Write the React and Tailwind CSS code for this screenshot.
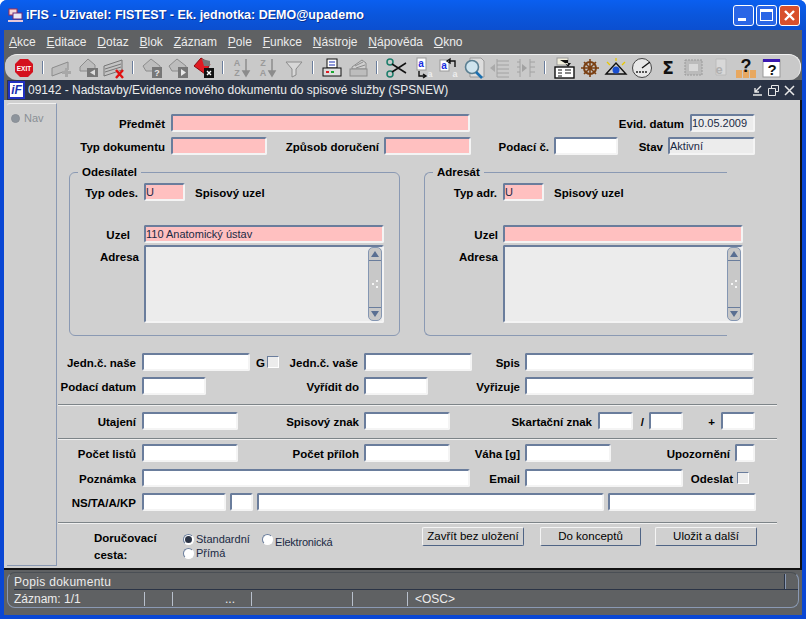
const sans = { fontFamily: '"Liberation Sans", Arial, sans-serif' }

function L({ w, className = '', children }) {
  return <div className={`shrink-0 whitespace-nowrap pt-[4px] text-right text-[11.5px] font-bold text-black ${w} ${className}`}>{children}</div>
}

function F({ c, tone = 'white', children }) {
  const bg = tone === 'pink' ? 'bg-[#ffc0c0]' : tone === 'grey' ? 'bg-[#ececec]' : 'bg-white'
  return (
    <div className={`h-[18px] shrink-0 overflow-hidden rounded-[2px] border-2 border-t-[#6a7d9c] border-l-[#6a7d9c] border-r-[#f4f4f4] border-b-[#f4f4f4] text-[11px] leading-[14px] text-[#1a2a44] ${bg} ${c}`}>
      {children}
    </div>
  )
}

function Row({ className = '', children }) {
  return <div className={`flex h-[18px] items-center ${className}`}>{children}</div>
}

function Divider({ className = '' }) {
  return <div className={`h-[2px] w-[719px] border-t border-b border-t-[#7d8488] border-b-[#f0f0f0] ${className}`} />
}

function Check({ className = '' }) {
  return <div className={`h-[12px] w-[12px] shrink-0 border border-t-[#6a7d9c] border-l-[#6a7d9c] border-r-white border-b-white bg-[#ececec] ${className}`} />
}

function Radio({ on, className = '' }) {
  return (
    <div className={`flex h-[11px] w-[11px] shrink-0 items-center justify-center rounded-full border border-t-[#6a7d9c] border-l-[#6a7d9c] border-r-white border-b-white bg-white ${className}`}>
      {on && <div className="h-[7px] w-[7px] rounded-full bg-[#2b3446]" />}
    </div>
  )
}

function Btn({ c, children }) {
  return (
    <div className={`flex h-[19px] items-center justify-center rounded-[2px] border border-t-[#f4f4f4] border-l-[#f4f4f4] border-r-[#4f6485] border-b-[#4f6485] bg-[#d0d0d0] text-[11.5px] text-black ${c}`}>
      {children}
    </div>
  )
}

function AddressBox() {
  return (
    <div className="ml-[5px] flex h-[78px] w-[240px] shrink-0 rounded-[2px] border-2 border-t-[#6a7d9c] border-l-[#6a7d9c] border-r-[#f4f4f4] border-b-[#f4f4f4] bg-[#ececec]">
      <div className="flex-1" />
      <div className="flex w-[14px] flex-col rounded-[5px] border border-[#8496b2] bg-[#c8c8c8]">
        <div className="flex h-[13px] items-center justify-center border-b border-b-[#6a7d9c]">
          <svg width="8" height="6" viewBox="0 0 8 6"><path d="M4 0L8 6H0Z" fill="#5a6f92" /></svg>
        </div>
        <div className="flex flex-1 items-center justify-center">
          <svg width="8" height="10" viewBox="0 0 8 10"><g fill="#f4f4f4"><rect x="5" y="1" width="2" height="2" /><rect x="1" y="4" width="2" height="2" /><rect x="5" y="7" width="2" height="2" /></g></svg>
        </div>
        <div className="flex h-[13px] items-center justify-center border-t border-t-[#6a7d9c]">
          <svg width="8" height="6" viewBox="0 0 8 6"><path d="M4 6L8 0H0Z" fill="#5a6f92" /></svg>
        </div>
      </div>
    </div>
  )
}

function Ic({ children }) {
  return (
    <span className="flex w-[26px] shrink-0 justify-center">
      <svg width="24" height="22" viewBox="0 0 24 22">{children}</svg>
    </span>
  )
}

function Sep() {
  return <span className="mx-[5px] h-[13px] w-[2px] shrink-0 border-l border-l-[#6a7d9c] bg-white" />
}

const card = { fill: '#bdbdbd', stroke: '#8c8c8c' }
const letters = { fontFamily: '"Liberation Sans", sans-serif', fontWeight: 700, fontSize: 9 }

function Toolbar() {
  return (
    <div className="mx-[1px] flex h-[26px] items-center rounded-[12px] border-t border-r border-t-[#f0f0f0] border-r-[#f0f0f0] bg-[#c9c9c9] pl-[6px]">
      <Ic>
        <path d="M8 2H16L21 7V15L16 20H8L3 15V7Z" fill="#d4111e" />
        <text x="12" y="13.5" textAnchor="middle" fill="#fff" style={{ ...letters, fontSize: 6.5 }}>EXIT</text>
      </Ic>
      <Sep />
      <Ic>
        <path d="M2 11L18 5V13L2 19Z" {...card} />
        <path d="M15 11H18V14H21V17H18V20H15V17H12V14H15Z" fill="#a8a8a8" />
      </Ic>
      <Ic>
        <path d="M4 10L12 2L19 8V14H4Z" {...card} />
        <rect x="11" y="11" width="11" height="9" fill="#777" />
        <path d="M14 15.5L19 12.5V18.5Z" fill="#ddd" />
      </Ic>
      <Ic>
        <path d="M2 9L20 3V13L2 19Z" fill="#c4c4c4" stroke="#777" />
        <path d="M3 12L19 7M3 15L19 10" stroke="#777" />
        <path d="M14 13L21 21M21 13L14 21" stroke="#e01010" strokeWidth="2.4" />
      </Ic>
      <Sep />
      <Ic>
        <path d="M3 9L11 2L20 9V14H6Z" {...card} />
        <rect x="12" y="10" width="10" height="11" fill="#777" />
        <text x="17" y="19" textAnchor="middle" fill="#e8e8e8" style={letters}>?</text>
      </Ic>
      <Ic>
        <path d="M3 9L11 2L20 9V14H6Z" {...card} />
        <rect x="12" y="10" width="10" height="11" fill="#777" />
        <path d="M15 12L20 15.5L15 19Z" fill="#e8e8e8" />
      </Ic>
      <Ic>
        <path d="M2 9L9 1L18 7L13 17Z" fill="#e01b22" stroke="#8a0a0e" />
        <path d="M10 2L18 4V9H12Z" fill="#777" />
        <rect x="12" y="11" width="10" height="10" fill="#111" />
        <path d="M15 14L19 18M19 14L15 18" stroke="#fff" strokeWidth="1.4" />
      </Ic>
      <Sep />
      <Ic>
        <text x="7" y="9" textAnchor="middle" fill="#9a9a9a" style={letters}>A</text>
        <text x="7" y="19" textAnchor="middle" fill="#9a9a9a" style={letters}>Z</text>
        <path d="M16 2V17M13 14L16 19L19 14Z" stroke="#8c8c8c" strokeWidth="1.5" fill="#8c8c8c" />
      </Ic>
      <Ic>
        <text x="7" y="9" textAnchor="middle" fill="#9a9a9a" style={letters}>Z</text>
        <text x="7" y="19" textAnchor="middle" fill="#9a9a9a" style={letters}>A</text>
        <path d="M16 2V17M13 14L16 19L19 14Z" stroke="#8c8c8c" strokeWidth="1.5" fill="#8c8c8c" />
      </Ic>
      <Ic>
        <path d="M4 5H20L14 12V18L10 20V12Z" fill="#d8d8d8" stroke="#8c8c8c" />
      </Ic>
      <Sep />
      <Ic>
        <rect x="7" y="2" width="10" height="9" fill="#fff" stroke="#111" />
        <path d="M9 5H15M9 8H15" stroke="#1a2fb0" />
        <rect x="3" y="11" width="18" height="8" fill="#ddd" stroke="#111" />
        <rect x="6" y="14" width="3" height="2" fill="#e01b22" />
        <rect x="11" y="14" width="3" height="2" fill="#19a832" />
      </Ic>
      <Ic>
        <path d="M6 10L16 3L20 6V12H6Z" fill="#cfcfcf" stroke="#8c8c8c" />
        <path d="M9 9L17 5M10 11L19 8" stroke="#8c8c8c" />
        <rect x="4" y="12" width="17" height="7" fill="#bdbdbd" stroke="#8c8c8c" />
      </Ic>
      <Sep />
      <Ic>
        <circle cx="6" cy="5" r="3" fill="none" stroke="#1b7d6a" strokeWidth="1.5" />
        <circle cx="6" cy="17" r="3" fill="none" stroke="#1b7d6a" strokeWidth="1.5" />
        <path d="M8 7L22 16M8 15L22 6" stroke="#111" strokeWidth="1.5" />
      </Ic>
      <Ic>
        <rect x="7" y="1" width="9" height="12" fill="#fff" stroke="#999" />
        <text x="11" y="10" textAnchor="middle" fill="#1a2fe0" style={{ ...letters, fontSize: 10 }}>a</text>
        <path d="M9 14V19H15M13 17L16 19L13 21" fill="none" stroke="#111" strokeWidth="1.4" />
        <text x="20" y="20" textAnchor="middle" fill="#eee" style={{ ...letters, fontSize: 9 }}>a</text>
      </Ic>
      <Ic>
        <rect x="4" y="3" width="9" height="11" fill="#fff" stroke="#999" />
        <text x="8" y="12" textAnchor="middle" fill="#1a2fe0" style={{ ...letters, fontSize: 10 }}>a</text>
        <path d="M13 4H19V10M11 4L14 2V6Z" fill="none" stroke="#111" strokeWidth="1.4" />
        <text x="19" y="20" textAnchor="middle" fill="#eee" style={{ ...letters, fontSize: 9 }}>a</text>
      </Ic>
      <Ic>
        <path d="M8 1H19L22 4V20H8Z" fill="#ddd" stroke="#999" />
        <circle cx="10" cy="10" r="6.5" fill="#cfe4ee" stroke="#5a7f92" strokeWidth="1.6" />
        <path d="M14 15L20 21" stroke="#1a6fb0" strokeWidth="2.6" />
      </Ic>
      <Ic>
        <path d="M2 11L7 7V15Z" fill="#aaa" />
        <path d="M9 2V20M9 4H21M9 8H21M9 12H21M9 16H21M9 20H21" stroke="#a2a2a2" />
      </Ic>
      <Ic>
        <path d="M6 2V20M6 5H3M6 10H3M6 15H3M16 2V20M16 5H21M16 10H21M16 15H21" stroke="#a2a2a2" />
        <path d="M8 7L13 11L8 15Z" fill="#a2a2a2" />
      </Ic>
      <Sep />
      <Ic>
        <rect x="5" y="1" width="11" height="7" fill="#f2efdc" stroke="#999" />
        <path d="M8 3H16V8M13 6L16 10L19 6Z" fill="#111" />
        <rect x="3" y="10" width="19" height="11" fill="#fff" stroke="#111" strokeWidth="1.4" />
        <path d="M6 13H10M6 16H10M6 19H10M13 13H19M13 16H19" stroke="#111" />
      </Ic>
      <Ic>
        <circle cx="12" cy="11" r="6" fill="none" stroke="#7a3f12" strokeWidth="2" />
        <path d="M3 11H21M12 2V20M6 5L18 17M18 5L6 17" stroke="#7a3f12" strokeWidth="1.6" />
      </Ic>
      <Ic>
        <path d="M2 17L12 6L22 17Z" fill="#cfcfcf" stroke="#111" strokeWidth="1.4" />
        <circle cx="12" cy="13" r="3.5" fill="#1a4fd0" />
        <path d="M3 5L6 8M12 1V4M21 5L18 8" stroke="#e8c800" strokeWidth="1.3" />
      </Ic>
      <Ic>
        <circle cx="12" cy="11" r="9.5" fill="#e8e8e8" stroke="#444" />
        <path d="M12 11L20 5" stroke="#111" strokeWidth="1.3" />
        <path d="M6 15H18" stroke="#555" strokeWidth="2" strokeDasharray="2 1" />
      </Ic>
      <Ic>
        <text x="12" y="17" textAnchor="middle" fill="#111" style={{ fontFamily: '"DejaVu Sans", sans-serif', fontSize: 17, fontWeight: 700 }}>Σ</text>
      </Ic>
      <Ic>
        <rect x="3" y="3" width="17" height="15" fill="#bbb" stroke="#999" strokeDasharray="2 1" />
        <rect x="7" y="7" width="9" height="7" fill="#d8d8d8" />
      </Ic>
      <Ic>
        <path d="M8 2H18V18H8Z" fill="#d8d8d8" stroke="#bbb" />
        <text x="11" y="17" textAnchor="middle" fill="#b0b0b0" style={{ ...letters, fontSize: 13 }}>e</text>
      </Ic>
      <Ic>
        <rect x="2" y="13" width="6" height="8" fill="#e8a860" />
        <rect x="9" y="13" width="6" height="8" fill="#e8a860" />
        <rect x="16" y="13" width="6" height="8" fill="#e8a860" />
        <text x="12" y="15" textAnchor="middle" fill="#111" style={{ ...letters, fontSize: 18 }}>?</text>
      </Ic>
      <Ic>
        <rect x="3" y="3" width="17" height="17" fill="#fff" stroke="#999" />
        <rect x="3" y="2" width="17" height="3" fill="#3a18b0" />
        <text x="12" y="18" textAnchor="middle" fill="#111" style={{ ...letters, fontSize: 15 }}>?</text>
      </Ic>
    </div>
  )
}

function WinBtn({ c, children }) {
  return <div className={`flex h-[21px] w-[21px] items-center justify-center rounded-[3px] border border-white ${c}`}>{children}</div>
}

export default function App() {
  const menus = [['A', 'kce'], ['E', 'ditace'], ['D', 'otaz'], ['B', 'lok'], ['Z', 'áznam'], ['P', 'ole'], ['F', 'unkce'], ['N', 'ástroje'], ['N', 'ápověda'], ['O', 'kno']]

  return (
    <div className="flex h-[619px] w-[806px] flex-col overflow-hidden rounded-t-[7px] bg-[#0a47d4]" style={sans}>
      {/* title bar */}
      <div className="flex h-[30px] shrink-0 items-center bg-gradient-to-b from-[#0a5ff0] via-[#0a56dc] to-[#0b4fd0] pl-[7px] pr-[6px]">
        <svg width="17" height="17" viewBox="0 0 17 17">
          <rect x="2" y="2" width="8" height="6" fill="#f3d9d9" stroke="#a52a4a" />
          <rect x="6" y="6" width="9" height="6" fill="#e8e8f4" stroke="#6b2a7a" />
          <path d="M1 14H16" stroke="#e8c8d8" strokeWidth="2" />
        </svg>
        <span className="ml-[2px] text-[12.5px] font-bold whitespace-nowrap text-white [text-shadow:1px_1px_#0a2f90]">iFIS - Uživatel: FISTEST - Ek. jednotka: DEMO@upademo</span>
        <div className="ml-auto flex gap-[2px]">
          <WinBtn c="bg-[#2a66e6]"><span className="mt-[9px] mr-[4px] h-[3px] w-[8px] bg-white" /></WinBtn>
          <WinBtn c="bg-[#2a66e6]"><span className="h-[12px] w-[13px] border border-t-[3px] border-white" /></WinBtn>
          <WinBtn c="bg-[#d8502c]">
            <svg width="13" height="13" viewBox="0 0 13 13"><path d="M2 2L11 11M11 2L2 11" stroke="#fff" strokeWidth="2.4" /></svg>
          </WinBtn>
        </div>
      </div>

      <div className="mx-[4px] flex flex-1 flex-col bg-[#5f6163]">
        {/* menu */}
        <div className="flex h-[24px] shrink-0 items-center gap-[10.8px] pl-[5px] text-[12px] text-[#ececec]">
          {menus.map(([u, rest], i) => (
            <span key={i} className="whitespace-nowrap"><span className="underline">{u}</span>{rest}</span>
          ))}
        </div>

        <Toolbar />

        {/* document window */}
        <div className="ml-[3px] flex h-[20px] shrink-0 items-center bg-[#2b3446] pl-[1px] pr-[7px]">
          <div className="flex h-[18px] w-[17px] items-center justify-center border-2 border-[#2030c0] bg-white text-[12px] leading-none font-bold text-[#1a2fb0] italic">iF</div>
          <span className="ml-[3px] text-[12px] whitespace-nowrap text-[#ececec]">09142 - Nadstavby/Evidence nového dokumentu do spisové služby (SPSNEW)</span>
          <div className="ml-auto flex items-center gap-[5px]">
            <svg width="11" height="11" viewBox="0 0 11 11"><path d="M9 1L3 7M3 3V7H7M1 10H10" fill="none" stroke="#e8e8e8" strokeWidth="1.4" /></svg>
            <svg width="11" height="11" viewBox="0 0 11 11"><path d="M3.5 3V0.5H10.5V6.5H8M0.5 3.5H7.5V10.5H0.5Z" fill="none" stroke="#e8e8e8" /></svg>
            <svg width="11" height="11" viewBox="0 0 11 11"><path d="M1 1L10 10M10 1L1 10" stroke="#e8e8e8" strokeWidth="1.5" /></svg>
          </div>
        </div>

        <div className="flex h-[470px] shrink-0 border-r-2 border-b-2 border-r-[#111] border-b-[#111] bg-[#d0d0d0]">
          <div className="mt-[3px] mb-[3px] ml-[3px] h-[463px] w-[50px] shrink-0 rounded-tl-[3px] border-t border-r border-b border-t-[#f0f0f0] border-r-[#8a99b3] border-b-[#8a99b3] bg-[#cfcfcf] pt-[9px] pl-[4px]">
            <div className="flex items-center gap-[4px] text-[11px] leading-none text-[#8a8f96]">
              <div className="h-[9px] w-[9px] rounded-full border border-[#8a8f96] bg-[#8d949c]" />
              Nav
            </div>
          </div>

          <div className="flex-1 pt-[14px] pl-[1px]">
            <Row>
              <L w="w-[107px]">Předmět</L>
              <F c="ml-[6px] w-[299px]" tone="pink" />
              <L w="w-[214px]">Evid. datum</L>
              <F c="ml-[6px] w-[65px]" tone="grey">10.05.2009</F>
            </Row>
            <Row className="mt-[5px]">
              <L w="w-[107px]">Typ dokumentu</L>
              <F c="ml-[6px] w-[96px]" tone="pink" />
              <L w="w-[112px]">Způsob doručení</L>
              <F c="ml-[5px] w-[87px]" tone="pink" />
              <L w="w-[78px]">Podací č.</L>
              <F c="ml-[5px] w-[64px]" />
              <L w="w-[45px]">Stav</L>
              <F c="ml-[5px] w-[87px]" tone="grey">Aktivní</F>
            </Row>

            <div className="mt-[10px] ml-[11px] flex">
              <fieldset className="box-border h-[171px] w-[331px] min-w-0 rounded-[6px] border border-[#8a99b3]">
                <legend className="ml-[8px] px-[4px] text-[11.5px] leading-[14px] font-bold text-black">Odesílatel</legend>
                <Row className="mt-[4px]">
                  <L w="w-[68px]">Typ odes.</L>
                  <F c="ml-[6px] w-[41px]" tone="pink">U</F>
                  <L w="" className="ml-[10px]">Spisový uzel</L>
                </Row>
                <Row className="mt-[24px]">
                  <L w="w-[60px]">Uzel</L>
                  <F c="ml-[14px] w-[240px]" tone="pink">110 Anatomický ústav</F>
                </Row>
                <div className="mt-[2px] flex">
                  <L w="w-[69px]">Adresa</L>
                  <AddressBox />
                </div>
              </fieldset>

              <fieldset className="ml-[24px] box-border h-[171px] w-[303px] min-w-0 rounded-l-[6px] border-t border-b border-l border-[#8a99b3]">
                <legend className="ml-[8px] px-[4px] text-[11.5px] leading-[14px] font-bold text-black">Adresát</legend>
                <Row className="mt-[4px]">
                  <L w="w-[72px]">Typ adr.</L>
                  <F c="ml-[6px] w-[41px]" tone="pink">U</F>
                  <L w="" className="ml-[10px]">Spisový uzel</L>
                </Row>
                <Row className="mt-[24px]">
                  <L w="w-[73px]">Uzel</L>
                  <F c="ml-[5px] w-[240px]" tone="pink" />
                </Row>
                <div className="mt-[2px] flex">
                  <L w="w-[73px]">Adresa</L>
                  <AddressBox />
                </div>
              </fieldset>
            </div>

            <Row className="mt-[17px]">
              <L w="w-[78px]">Jedn.č. naše</L>
              <F c="ml-[6px] w-[108px]" />
              <L w="w-[15px]" className="text-[#222]">G</L>
              <Check className="ml-[2px]" />
              <L w="w-[79px]">Jedn.č. vaše</L>
              <F c="ml-[6px] w-[108px]" />
              <L w="w-[48px]">Spis</L>
              <F c="ml-[5px] w-[229px]" />
            </Row>
            <Row className="mt-[6px]">
              <L w="w-[78px]">Podací datum</L>
              <F c="ml-[6px] w-[64px]" />
              <L w="w-[153px]">Vyřídit do</L>
              <F c="ml-[5px] w-[64px]" />
              <L w="w-[92px]">Vyřizuje</L>
              <F c="ml-[5px] w-[229px]" />
            </Row>
            <Divider className="mt-[9px]" />
            <Row className="mt-[6px]">
              <L w="w-[78px]">Utajení</L>
              <F c="ml-[6px] w-[96px]" />
              <L w="w-[121px]">Spisový znak</L>
              <F c="ml-[5px] w-[86px]" />
              <L w="w-[142px]">Skartační znak</L>
              <F c="ml-[6px] w-[35px]" />
              <L w="w-[11px]">/</L>
              <F c="ml-[5px] w-[34px]" />
              <L w="w-[32px]">+</L>
              <F c="ml-[6px] w-[34px]" />
            </Row>
            <Divider className="mt-[8px]" />
            <Row className="mt-[4px]">
              <L w="w-[78px]">Počet listů</L>
              <F c="ml-[6px] w-[96px]" />
              <L w="w-[121px]">Počet příloh</L>
              <F c="ml-[5px] w-[86px]" />
              <L w="w-[70px]">Váha [g]</L>
              <F c="ml-[5px] w-[86px]" />
              <L w="w-[119px]" className="pt-[2px]">Upozornění</L>
              <F c="ml-[5px] w-[20px]" />
            </Row>
            <Row className="mt-[7px]">
              <L w="w-[78px]">Poznámka</L>
              <F c="ml-[6px] w-[328px]" />
              <L w="w-[50px]">Email</L>
              <F c="ml-[5px] w-[158px]" />
              <L w="w-[50px]">Odeslat</L>
              <Check className="ml-[4px]" />
            </Row>
            <Row className="mt-[6px]">
              <L w="w-[78px]">NS/TA/A/KP</L>
              <F c="ml-[6px] w-[84px]" />
              <F c="ml-[4px] w-[23px]" />
              <F c="ml-[4px] w-[347px]" />
              <F c="ml-[4px] w-[148px]" />
            </Row>
            <Divider className="mt-[11px]" />

            <div className="flex">
              <div className="mt-[6px] ml-[36px] w-[89px] text-[11.5px] leading-[17px] font-bold text-black">
                Doručovací
                <br />
                cesta:
              </div>
              <div className="mt-[8px] w-[66px] text-[11px] leading-[14px] text-[#1a2a44]">
                <div className="flex items-center gap-[2px]"><Radio on />Standardní</div>
                <div className="flex items-center gap-[2px]"><Radio />Přímá</div>
              </div>
              <div className="mt-[8px] ml-[13px] flex w-[70px] items-center gap-[2px] self-start text-[11px] tracking-[-0.2px] text-[#1a2a44]">
                <Radio className="mb-[3px]" /><span className="mt-[2px]">Elektronická</span>
              </div>
              <div className="mt-[3px] ml-[90px] flex self-start">
                <Btn c="w-[102px]">Zavřít bez uložení</Btn>
                <Btn c="ml-[16px] w-[101px]">Do konceptů</Btn>
                <Btn c="ml-[14px] w-[102px]">Uložit a další</Btn>
              </div>
            </div>
          </div>
        </div>

        {/* status */}
        <div className="mx-[3px] mt-[2px] h-[36px] shrink-0 rounded-[8px] border border-[#8a99b3] border-t-[#4a4f55] bg-[#5f6163] pl-[6px] text-[12px] text-[#ececec]">
          <div className="flex h-[17px] items-center border-b border-b-[#2b3446] pt-[1px] tracking-[0.3px]">
            Popis dokumentu
            <span className="mr-[12px] ml-auto h-full w-[2px] border-l border-l-[#2b3446] bg-[#8a99b3]" />
          </div>
          <div className="flex h-[18px] items-center">
            <span className="w-[130px]">Záznam: 1/1</span>
            <span className="h-[14px] w-[28px] border-l border-l-[#b8c0cc]" />
            <span className="flex h-[14px] w-[79px] items-center justify-center border-l border-l-[#b8c0cc] pl-[36px] leading-none">...</span>
            <span className="h-[14px] w-[101px] border-l border-l-[#b8c0cc]" />
            <span className="h-[14px] w-[55px] border-l border-l-[#b8c0cc]" />
            <span className="flex h-[14px] items-center border-l border-l-[#b8c0cc] pl-[7px]">&lt;OSC&gt;</span>
          </div>
        </div>
      </div>
      <div className="h-[4px] shrink-0" />
    </div>
  )
}
